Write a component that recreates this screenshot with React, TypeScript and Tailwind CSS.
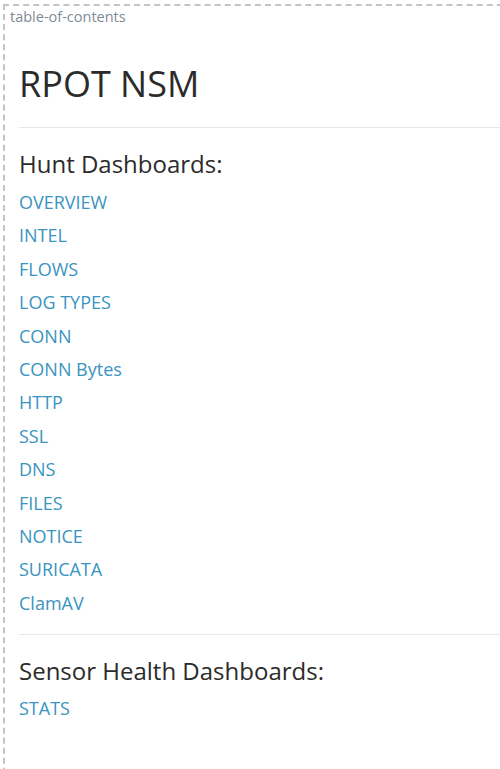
import React from "react";

const hunt = ["OVERVIEW","INTEL","FLOWS","LOG TYPES","CONN","CONN Bytes","HTTP","SSL","DNS","FILES","NOTICE","SURICATA","ClamAV"];

export default function App() {
  return (
    <div className="w-[500px] h-[769px] overflow-hidden bg-white" style={{ fontFamily: '"Open Sans", sans-serif' }}>
      <div className="ml-[3px] mt-[4px] w-[520px] h-[800px] border-2 border-dashed border-[#c4c4c4]">
        <div className="pl-[5px] pt-[2px] text-[14.5px] leading-[18px] text-[#7f8b95]">table-of-contents</div>
        <div className="pl-[14px]">
          <h1 className="mt-[36px] text-[36px] leading-[44px] text-[#2b2b2b]">RPOT NSM</h1>
          <hr className="mt-[21px] border-t border-[#e8e8e8]" />
          <h2 className="mt-[20px] text-[24px] leading-[32px] text-[#2b2b2b]">Hunt Dashboards:</h2>
          <ul className="mt-[6px]">
            {hunt.map((h) => (
              <li key={h} className="text-[18px] leading-[33.4px] text-[#3a94c0]">{h}</li>
            ))}
          </ul>
          <hr className="mt-[14px] border-t border-[#e8e8e8]" />
          <h2 className="mt-[20px] text-[24px] leading-[32px] text-[#2b2b2b]">Sensor Health Dashboards:</h2>
          <ul className="mt-[5px]">
            <li className="text-[18px] leading-[33.4px] text-[#3a94c0]">STATS</li>
          </ul>
        </div>
      </div>
    </div>
  );
}
